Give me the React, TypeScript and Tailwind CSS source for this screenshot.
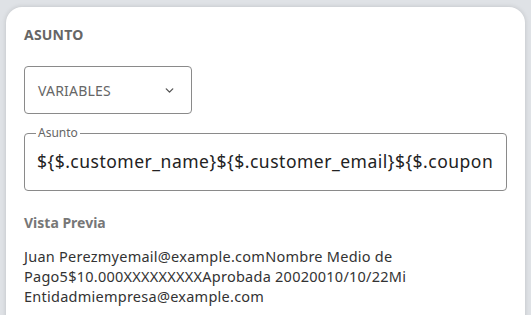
import { ChevronDown } from 'lucide-react';

const App = () => {
  return (
    <div className="w-[531px] h-[315px] overflow-hidden bg-[#dfe2e6] pt-[7px] px-[6px] font-['Noto_Sans',sans-serif]">
      <div className="h-[330px] w-[519px] bg-white rounded-t-[16px] shadow-[0_0_5px_rgba(0,0,0,0.14)] pl-[18px] pr-[18px] pt-[18px]">
        <h3 className="text-[14px] leading-[20px] font-bold text-[#666] tracking-[0.2px]">ASUNTO</h3>

        <button className="mt-[21px] w-[168px] h-[48px] flex items-center justify-between px-[13px] border border-[#8a8a8a] rounded-[4px] text-[14px] text-[#666] tracking-[0.2px]">
          <span>VARIABLES</span>
          <ChevronDown className="w-[13px] h-[13px] text-[#555] mr-[2px]" strokeWidth={2.5} />
        </button>

        <fieldset className="mt-[12px] min-w-0 w-[483px] h-[65px] border border-[#8a8a8a] rounded-[4px] px-[12px] pb-[8px]">
          <legend className="px-[2px] ml-[-1px] text-[12px] leading-[14px] text-[#666]">Asunto</legend>
          <div className="mt-[9px] overflow-hidden whitespace-nowrap text-[17.5px] leading-[24px] text-[#222] tracking-[0.5px]">
            {'${$.customer_name}${$.customer_email}${$.coupon'}
          </div>
        </fieldset>

        <h4 className="mt-[22px] text-[14px] leading-[20px] font-bold text-[#777]">Vista Previa</h4>
        <p className="mt-[13px] text-[14.5px] leading-[20px] text-[#333] tracking-[0.25px]">
          <span className="block">Juan Perezmyemail@example.comNombre Medio de</span>
          <span className="block">Pago5$10.000XXXXXXXXXAprobada 20020010/10/22Mi</span>
          <span className="block">Entidadmiempresa@example.com</span>
        </p>
      </div>
    </div>
  );
};

export default App;
